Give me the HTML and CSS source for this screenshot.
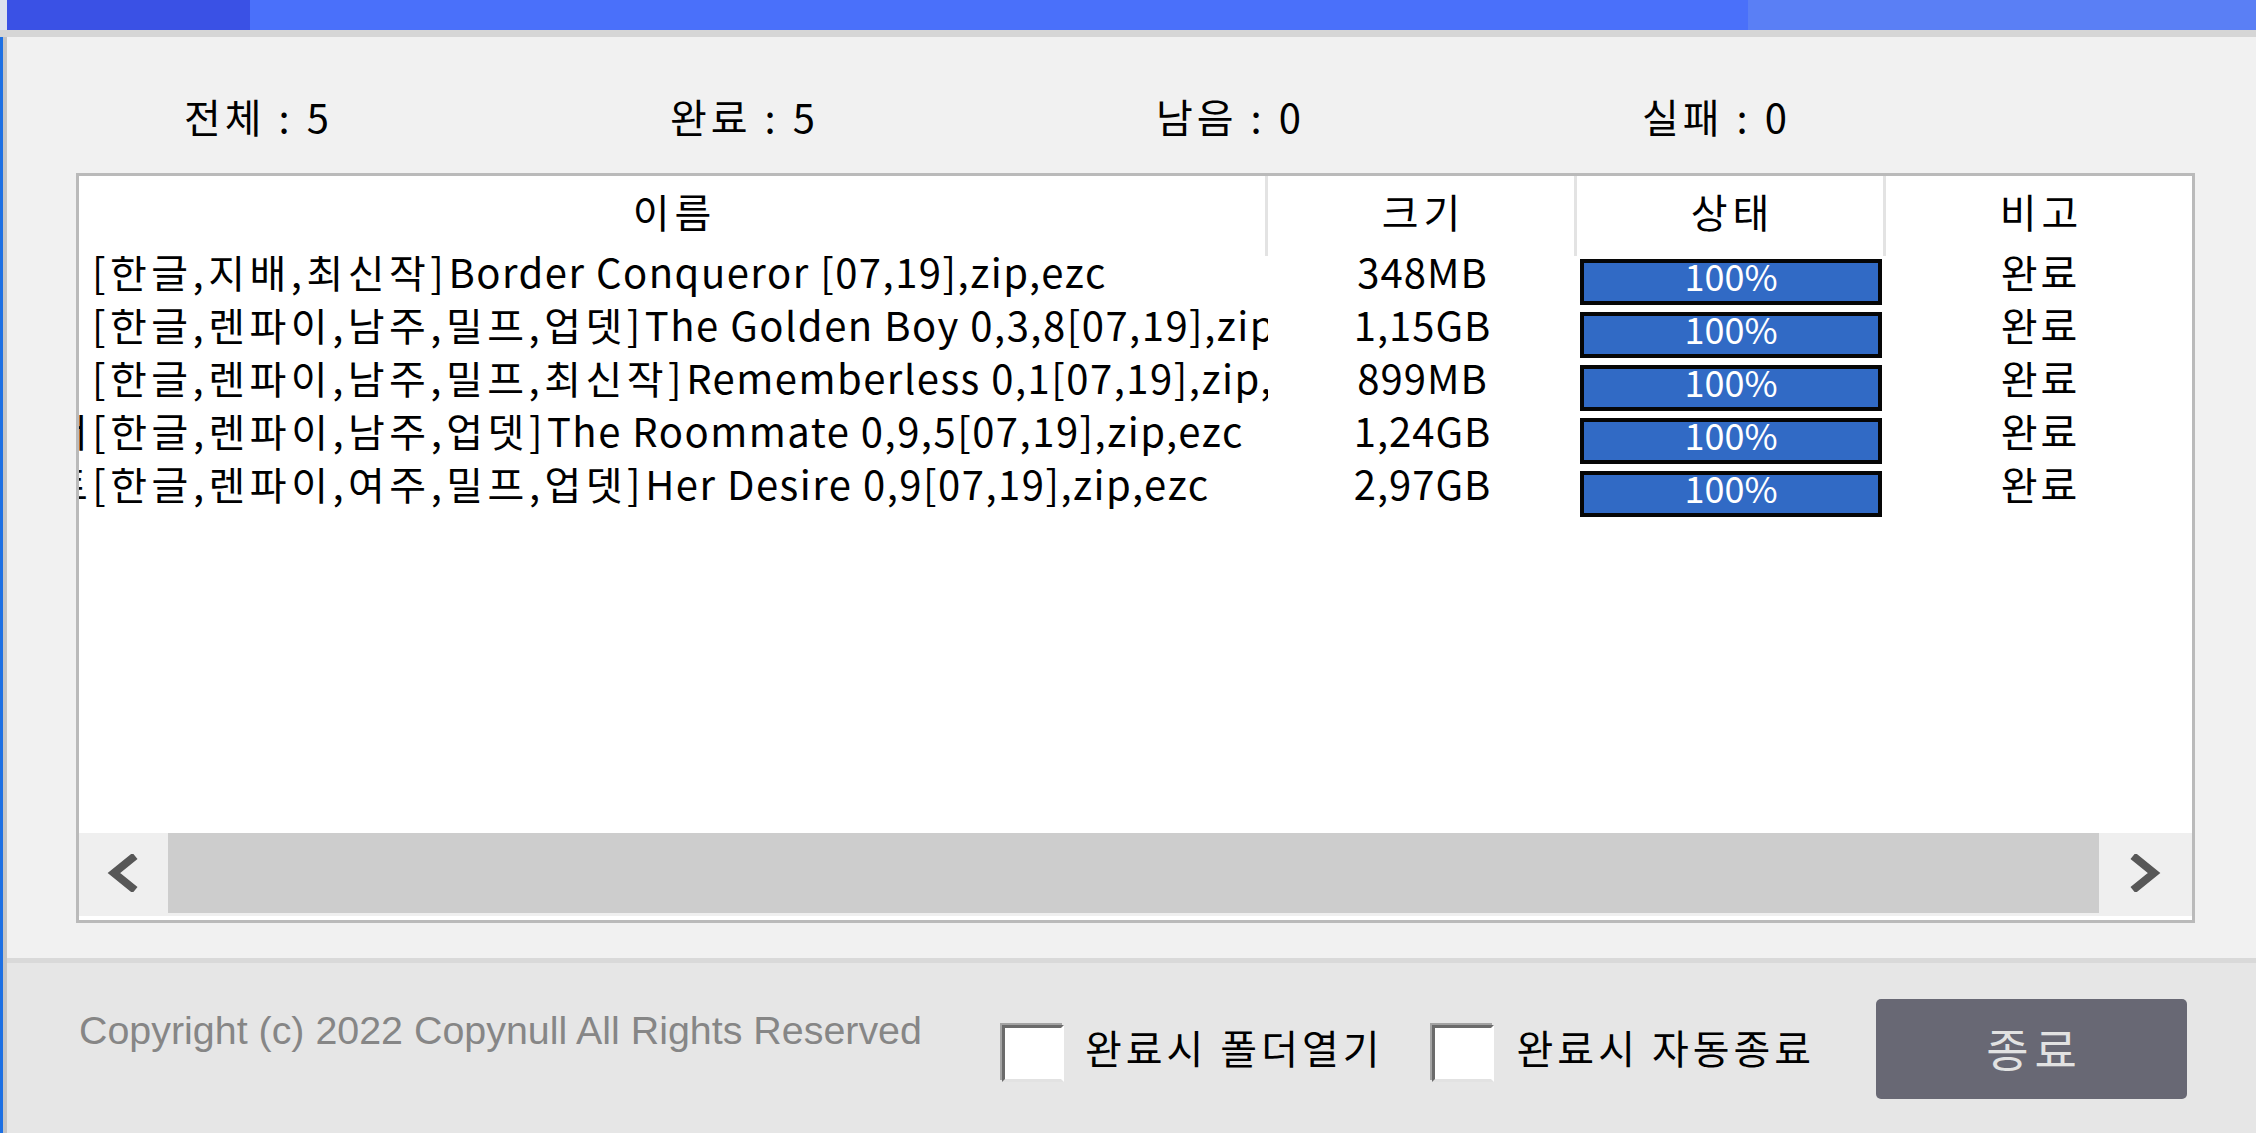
FILE: index.html
```html
<!DOCTYPE html>
<html>
<head>
  <meta charset="UTF-8">
  <title>다운로드</title>
  <link rel="stylesheet" href="styles.css">
</head>
<body>
  <div class="window">
    <div class="titlebar">
      <div class="tb-seg tb-done"></div>
      <div class="tb-seg tb-mid"></div>
      <div class="tb-seg tb-end"></div>
    </div>
    <div class="titlebar-shade"></div>

    <div class="frame">
      <div class="frame-inner">
        <div class="content">
          <div class="stats">
            <div class="stat">전체 : 5</div>
            <div class="stat">완료 : 5</div>
            <div class="stat">남음 : 0</div>
            <div class="stat">실패 : 0</div>
          </div>

          <div class="list">
            <div class="list-head">
              <div class="col-head">이름</div>
              <div class="col-head">크기</div>
              <div class="col-head">상태</div>
              <div class="col-head last">비고</div>
            </div>

            <div class="list-body">
              <div class="row">
                <div class="cell cell-name"><span class="tag">[한글,지배,최신작]</span>Border Conqueror [07,19],zip,ezc</div>
                <div class="cell cell-center">348MB</div>
                <div class="cell cell-status"><div class="bar">100%</div></div>
                <div class="cell cell-center cell-note">완료</div>
              </div>
              <div class="row">
                <div class="cell cell-name"><span class="tag">[한글,렌파이,남주,밀프,업뎃]</span>The Golden Boy 0,3,8[07,19],zip,ezc</div>
                <div class="cell cell-center">1,15GB</div>
                <div class="cell cell-status"><div class="bar">100%</div></div>
                <div class="cell cell-center cell-note">완료</div>
              </div>
              <div class="row">
                <div class="cell cell-name"><span class="tag">[한글,렌파이,남주,밀프,최신작]</span>Rememberless 0,1[07,19],zip,ezc</div>
                <div class="cell cell-center">899MB</div>
                <div class="cell cell-status"><div class="bar">100%</div></div>
                <div class="cell cell-center cell-note">완료</div>
              </div>
              <div class="row">
                <div class="cell cell-name cut"><span class="tag">서[한글,렌파이,남주,업뎃]</span>The Roommate 0,9,5[07,19],zip,ezc</div>
                <div class="cell cell-center">1,24GB</div>
                <div class="cell cell-status"><div class="bar">100%</div></div>
                <div class="cell cell-center cell-note">완료</div>
              </div>
              <div class="row">
                <div class="cell cell-name cut"><span class="tag">트[한글,렌파이,여주,밀프,업뎃]</span>Her Desire 0,9[07,19],zip,ezc</div>
                <div class="cell cell-center">2,97GB</div>
                <div class="cell cell-status"><div class="bar">100%</div></div>
                <div class="cell cell-center cell-note">완료</div>
              </div>
            </div>

            <div class="hscroll">
              <div class="scroll-btn scroll-left">
                <svg width="32" height="38" viewBox="0 0 32 38"><path d="M29 2 L8 19 L29 36" fill="none" stroke="#575757" stroke-width="8"/></svg>
              </div>
              <div class="scroll-thumb"></div>
              <div class="scroll-btn scroll-right">
                <svg width="32" height="38" viewBox="0 0 32 38"><path d="M3 2 L24 19 L3 36" fill="none" stroke="#575757" stroke-width="8"/></svg>
              </div>
            </div>
          </div>
        </div>

        <div class="footer">
          <div class="copyright">Copyright (c) 2022 Copynull All Rights Reserved</div>
          <div class="option">
            <span class="check"></span>
            <span class="option-label">완료시 폴더열기</span>
          </div>
          <div class="option">
            <span class="check"></span>
            <span class="option-label">완료시 자동종료</span>
          </div>
          <button class="close-button">종료</button>
        </div>
      </div>
    </div>
  </div>
</body>
</html>
```

FILE: styles.css
```css
body {
  margin: 0;
  background-color: #f1f1f1;
  font-family: "Noto Sans CJK KR", "Noto Sans", sans-serif;
  color: #000;
}

.window {
  width: 2256px;
  height: 1133px;
  overflow: hidden;
}

/* 상단 진행 표시 */
.titlebar {
  display: flex;
  height: 30px;
  border-left: 7px solid #dde2ee;
}

.tb-seg {
  height: 100%;
}

.tb-done {
  width: 243px;
  background-color: #3a51e5;
}

.tb-mid {
  width: 1498px;
  background-color: #4a70fa;
}

.tb-end {
  flex: 1;
  background-color: #5a7ff5;
}

.titlebar-shade {
  height: 7px;
  background-color: #d6d6d6;
}

.frame {
  border-left: 3px solid #1c6fe3;
}

.frame-inner {
  border-left: 4px solid #c4c4c4;
}

.content {
  height: 921px;
  box-sizing: border-box;
  padding: 56px 0 0 69px;
}

/* 통계 */
.stats {
  display: flex;
  height: 46px;
  line-height: 46px;
  font-size: 40px;
  letter-spacing: 4px;
  padding-left: 108px;
  margin-bottom: 34px;
}

.stat {
  width: 486px;
  white-space: nowrap;
}

/* 목록 */
.list {
  width: 2113px;
  height: 744px;
  border: 3px solid #bababa;
  background-color: #fff;
  display: flex;
  flex-direction: column;
}

.list-head,
.row {
  display: grid;
  grid-template-columns: 1189px 309px 309px 306px;
}

.list-head {
  height: 80px;
}

.col-head {
  border-right: 3px solid #e3e3e3;
  text-align: center;
  font-size: 40px;
  line-height: 71px;
  letter-spacing: 5px;
  text-indent: 5px;
}

.col-head.last {
  border-right: none;
}

.list-body {
  flex: 1;
}

.row {
  height: 53px;
}

.cell {
  font-size: 40px;
  line-height: 30px;
  white-space: nowrap;
  overflow: hidden;
}

.cell-name {
  padding-left: 13px;
  letter-spacing: 1.5px;
}

.cell-name .tag {
  letter-spacing: 4.5px;
}

.cell-name.cut {
  text-indent: -41px;
}

.cell-center {
  text-align: center;
  letter-spacing: 1px;
}

.cell-note {
  letter-spacing: 3px;
  text-indent: 3px;
}

.cell-status {
  padding: 3px 0 0 3px;
}

.bar {
  width: 294px;
  height: 38px;
  border: 4px solid #060606;
  background-color: #316ac5;
  color: #fff;
  text-align: center;
  font-size: 36px;
  line-height: 25px;
}

/* 가로 스크롤 */
.hscroll {
  display: flex;
  height: 80px;
  background-color: #efefef;
  border-bottom: 3px solid #efefef;
  margin-bottom: 4px;
}

.scroll-btn {
  display: flex;
  align-items: center;
  justify-content: center;
}

.scroll-left {
  width: 85px;
  padding-right: 4px;
}

.scroll-right {
  width: 93px;
}

.scroll-thumb {
  flex: 1;
  background-color: #cdcdcd;
}

/* 하단 */
.footer {
  display: flex;
  align-items: flex-start;
  height: 170px;
  border-top: 5px solid #d9d9d9;
  background-color: #e6e6e6;
}

.copyright {
  flex: 0 0 923px;
  margin: 44px 0 0 72px;
  font-family: "Liberation Sans", Arial, sans-serif;
  font-size: 39.4px;
  line-height: 46px;
  color: #868686;
  white-space: nowrap;
}

.option {
  display: flex;
  align-items: center;
  margin-top: 62px;
}

.option + .option {
  margin-left: 48px;
}

.check {
  width: 56px;
  height: 51px;
  border: 3px solid;
  border-color: #6b6b6b #ffffff #e2e2e2 #6b6b6b;
  background-color: #fff;
  box-shadow: -2px -2px 0 #a3a3a3;
}

.option-label {
  margin-left: 21px;
  margin-bottom: 14px;
  font-size: 40px;
  line-height: 40px;
  letter-spacing: 4px;
  white-space: nowrap;
}

.option + .option .option-label {
  margin-left: 23px;
}

.close-button {
  margin: 36px 69px 0 auto;
  width: 311px;
  height: 100px;
  border: none;
  border-radius: 5px;
  background-color: #686874;
  color: #e2e2e2;
  font-family: "Noto Sans CJK KR", sans-serif;
  font-size: 46px;
  letter-spacing: 6px;
  padding: 0 0 4px 6px;
}
```
